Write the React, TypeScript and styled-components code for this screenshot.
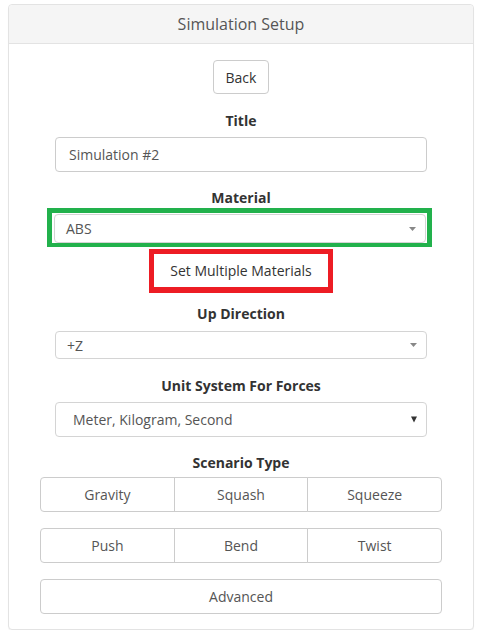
import React from 'react';
import styled, {createGlobalStyle} from 'styled-components';

const GlobalStyle = createGlobalStyle`
	body {
		margin: 0;
		background: #ffffff;
		font-family: "Open Sans", "Liberation Sans", sans-serif;
		color: #333;
	}
`;

const Panel = styled.div`
	margin: 4px 6px 0 8px;
	width: 464px;
	border: 1px solid #e3e3e3;
	border-radius: 4px;
	background: #fff;
	box-shadow: 0 1px 1px rgba(0, 0, 0, 0.04);
`;

const PanelHeader = styled.div`
	height: 38px;
	display: flex;
	align-items: center;
	justify-content: center;
	background: #f5f5f5;
	border-bottom: 1px solid #e3e3e3;
	border-radius: 4px 4px 0 0;
	font-size: 16px;
	color: #555;
`;

const PanelBody = styled.div`
	display: flex;
	flex-direction: column;
	align-items: center;
	padding: 16px 0 15px;
`;

const Button = styled.button`
	font-family: inherit;
	font-size: 14px;
	color: #333;
	background: #fff;
	border: 1px solid #ccc;
	border-radius: 4px;
	height: 34px;
	padding: 0 12px;
	cursor: pointer;
`;

const Label = styled.div<{ $top: number; $bottom: number }>`
	font-size: 14px;
	font-weight: 700;
	color: #333;
	line-height: 20px;
	margin-top: ${p => p.$top}px;
	margin-bottom: ${p => p.$bottom}px;
`;

const TextInput = styled.input`
	box-sizing: border-box;
	width: 372px;
	height: 35px;
	padding: 0 13px;
	font-family: inherit;
	font-size: 14px;
	color: #555;
	border: 1px solid #ccc;
	border-radius: 4px;
	outline: none;
`;

const SelectBox = styled.div<{ $height: number; $pad: number }>`
	box-sizing: border-box;
	width: 372px;
	height: ${p => p.$height}px;
	display: flex;
	align-items: center;
	justify-content: space-between;
	padding: 0 9px 0 ${p => p.$pad}px;
	font-size: 14px;
	color: #555;
	background: #fff;
	border: 1px solid #d4d4d4;
	border-radius: 4px;
`;

const GreenFrame = styled.div`
	border: solid #22b14c;
	border-width: 5px 5px 4px 5px;
	padding: 1px 1px 0 2px;
	margin-left: -3px;
`;

const RedButton = styled.button`
	box-sizing: border-box;
	width: 184px;
	height: 44px;
	margin-top: 2px;
	font-family: inherit;
	font-size: 14px;
	color: #333;
	background: #fff;
	border: 5px solid #ed1c24;
	border-bottom-width: 6px;
	padding: 0;
`;

const Group = styled.div<{ $top: number }>`
	display: flex;
	width: 402px;
	margin-top: ${p => p.$top}px;
`;

const GroupButton = styled.button`
	flex: 1;
	height: 35px;
	font-family: inherit;
	font-size: 14px;
	color: #555;
	background: #fff;
	border: 1px solid #ccc;
	border-radius: 0;
	margin-left: -1px;
	&:first-child {
		margin-left: 0;
		border-radius: 4px 0 0 4px;
	}
	&:last-child {
		border-radius: 0 4px 4px 0;
	}
	&:only-child {
		border-radius: 4px;
	}
`;

const Caret = ({dark}: { dark?: boolean }) =>
	dark ? (
		<svg width="6" height="7" viewBox="0 0 6 7">
			<path d="M0 0.5 H6 L3 6.5 Z" fill="#333"/>
		</svg>
	) : (
		<svg width="7" height="4" viewBox="0 0 7 4">
			<path d="M0 0 H7 L3.5 4 Z" fill="#888"/>
		</svg>
	);

export default function App() {
	return (
		<>
			<GlobalStyle/>
			<Panel>
				<PanelHeader>Simulation Setup</PanelHeader>
				<PanelBody>
					<Button>Back</Button>

					<Label $top={17} $bottom={6}>Title</Label>
					<TextInput defaultValue="Simulation #2"/>

					<Label $top={16} $bottom={0}>Material</Label>
					<GreenFrame>
						<SelectBox $height={29} $pad={11}>
							<span>ABS</span>
							<Caret/>
						</SelectBox>
					</GreenFrame>
					<RedButton>Set Multiple Materials</RedButton>

					<Label $top={11} $bottom={7}>Up Direction</Label>
					<SelectBox $height={28} $pad={11}>
						<span>+Z</span>
						<Caret/>
					</SelectBox>

					<Label $top={17} $bottom={6}>Unit System For Forces</Label>
					<SelectBox $height={35} $pad={17}>
						<span>Meter, Kilogram, Second</span>
						<Caret dark/>
					</SelectBox>

					<Label $top={16} $bottom={4}>Scenario Type</Label>
					<Group $top={0}>
						<GroupButton>Gravity</GroupButton>
						<GroupButton>Squash</GroupButton>
						<GroupButton>Squeeze</GroupButton>
					</Group>
					<Group $top={16}>
						<GroupButton>Push</GroupButton>
						<GroupButton>Bend</GroupButton>
						<GroupButton>Twist</GroupButton>
					</Group>
					<Group $top={16}>
						<GroupButton>Advanced</GroupButton>
					</Group>
				</PanelBody>
			</Panel>
		</>
	);
}
